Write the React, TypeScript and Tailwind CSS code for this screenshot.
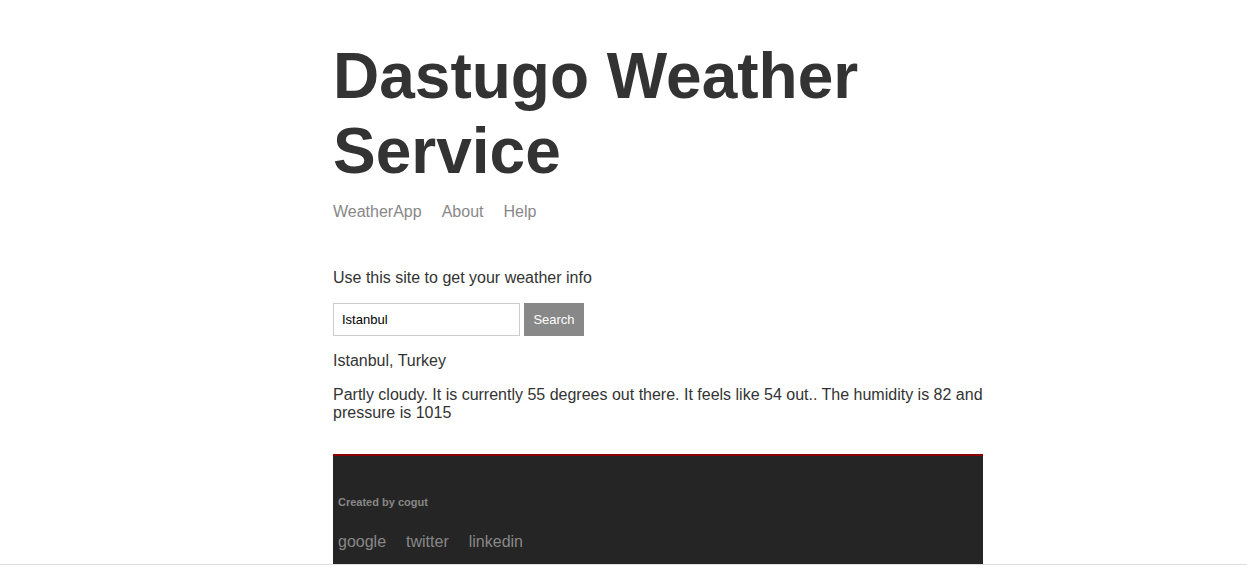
import React from "react";

export default function App() {
  return (
    <div className="min-h-[571px] bg-white font-['Liberation_Sans',Arial,sans-serif] text-[#333]">
      <div className="w-[650px] ml-[333px]">
        <h1 className="pt-[39px] text-[64px] leading-[75px] font-bold text-[#333]">
          Dastugo Weather Service
        </h1>
        <nav className="mt-[14px] flex gap-[20px] text-[16px] leading-[18px] text-[#888]">
          <a href="#">WeatherApp</a>
          <a href="#">About</a>
          <a href="#">Help</a>
        </nav>
        <p className="mt-[48px] text-[16px] leading-[18px]">Use this site to get your weather info</p>
        <form className="mt-[16px] flex gap-[4px]" onSubmit={(e) => e.preventDefault()}>
          <input
            defaultValue="Istanbul"
            className="w-[187px] h-[33px] border border-[#ccc] px-[8px] text-[13px] text-black outline-none"
          />
          <button className="w-[60px] h-[33px] bg-[#888] text-white text-[13px]">Search</button>
        </form>
        <p className="mt-[16px] text-[16px] leading-[18px]">Istanbul, Turkey</p>
        <p className="mt-[16px] text-[16px] leading-[18px]">
          Partly cloudy. It is currently 55 degrees out there. It feels like 54 out.. The humidity is 82 and pressure is 1015
        </p>
        <footer className="mt-[32px] h-[110px] bg-[#252525] border-t-2 border-[#8b0000] px-[5px]">
          <p className="pt-[40px] text-[11px] leading-[13px] font-bold text-[#888]">Created by cogut</p>
          <div className="mt-[24px] flex gap-[20px] text-[16px] leading-[18px] text-[#888]">
            <a href="#">google</a>
            <a href="#">twitter</a>
            <a href="#">linkedin</a>
          </div>
        </footer>
      </div>
      <div className="border-t border-[#ddd]" />
    </div>
  );
}
